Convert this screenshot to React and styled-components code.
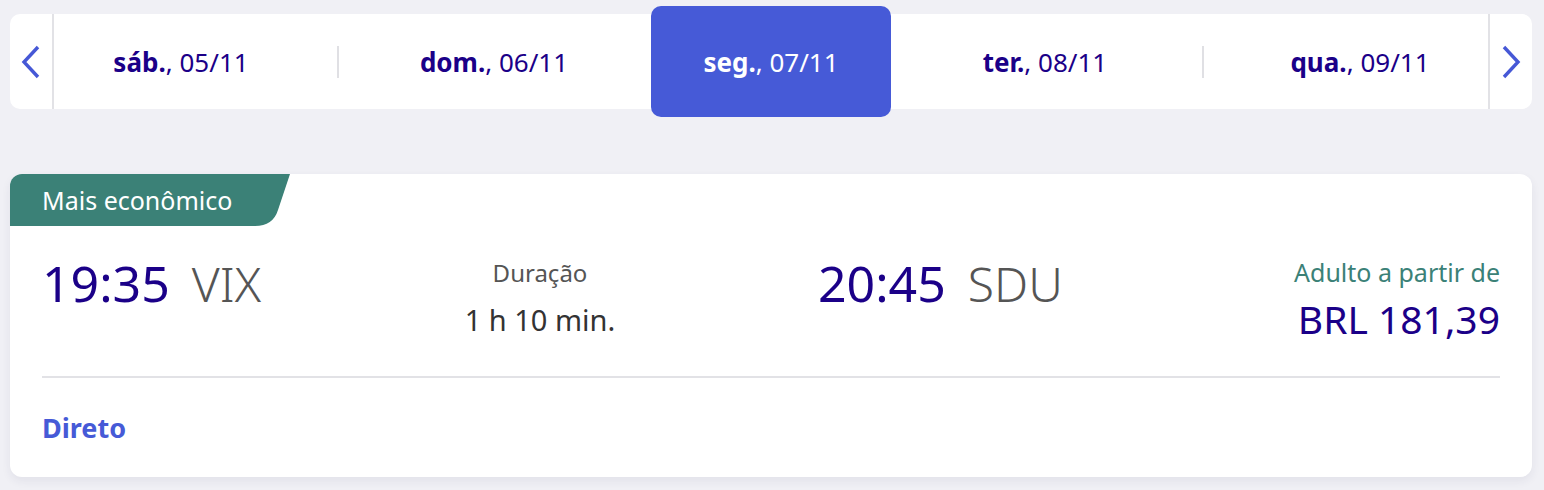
import React from 'react';
import styled, { createGlobalStyle } from 'styled-components';

const GlobalStyle = createGlobalStyle`
    body {
        margin: 0;
        background-color: #f0f0f5;
        font-family: "Noto Sans", "Open Sans", sans-serif;
    }
`

const Page = styled.div`
    width: 1544px;
    height: 490px;
    padding: 14px 12px 0 10px;
    box-sizing: border-box;
    display: flex;
    flex-direction: column;
`

const DateBar = styled.div`
    height: 95px;
    background-color: white;
    border-radius: 10px;
    display: flex;
    align-items: stretch;
`

const ArrowButton = styled.button`
    width: 44px;
    flex-shrink: 0;
    border: none;
    background: transparent;
    padding: 0;
    display: flex;
    align-items: center;
    justify-content: center;
    border-${p => p.side === 'left' ? 'right' : 'left'}: 2px solid #e2e2e6;
    color: #4658d6;
    cursor: pointer;
`

const Days = styled.div`
    flex: 1;
    display: grid;
    grid-template-columns: 240px 73px 240px 37px 240px 34px 240px 75px 240px;
    grid-template-rows: 95px;
    padding: 0 6px 0 7px;
    align-items: center;
`

const Day = styled.div`
    height: ${p => p.active ? '111px' : '95px'};
    margin: ${p => p.active ? '-8px 0' : '0'};
    border-radius: 10px;
    display: flex;
    align-items: center;
    justify-content: center;
    background-color: ${p => p.active ? '#465ad7' : 'transparent'};
    color: ${p => p.active ? 'white' : '#1b0088'};
    font-size: 26px;
    white-space: nowrap;

    b {
        font-weight: 700;
    }
`

const Gap = styled.div`
    display: flex;
    justify-content: center;
    &::after {
        content: '';
        display: ${p => p.line ? 'block' : 'none'};
        width: 2px;
        height: 32px;
        background-color: #e0e0e4;
    }
`

const Card = styled.div`
    margin-top: 65px;
    height: 303px;
    background-color: white;
    border-radius: 12px;
    box-shadow: 0 4px 10px rgba(40, 40, 90, 0.07);
    display: flex;
    flex-direction: column;
    overflow: hidden;
`

const Badge = styled.div`
    width: 280px;
    height: 52px;
    flex-shrink: 0;
    background-color: #3b8177;
    clip-path: path('M0 0 H280 L268 36 Q263 52 245 52 H0 Z');
    color: white;
    font-size: 25px;
    padding-left: 32px;
    box-sizing: border-box;
    display: flex;
    align-items: center;
`

const FlightRow = styled.div`
    display: grid;
    grid-template-columns: 220px 556px 1fr auto;
    padding: 0 32px;
    height: 150px;
    align-items: start;
`

const Times = styled.div`
    display: flex;
    align-items: baseline;
    gap: 22px;
    margin-top: 32px;
    line-height: 1;
    white-space: nowrap;
`

const Hour = styled.span`
    font-size: 50px;
    color: #1b0088;
`

const Airport = styled.span`
    font-size: 48px;
    font-weight: 300;
    color: #555;
`

const Duration = styled.div`
    display: flex;
    flex-direction: column;
    align-items: center;
    gap: 20px;
    margin-top: 35px;
    line-height: 1;
`

const SmallLabel = styled.div`
    font-size: ${p => p.size || 24}px;
    color: ${p => p.color || '#555'};
`

const DurationValue = styled.div`
    font-size: 29px;
    color: #333;
`

const Price = styled.div`
    display: flex;
    flex-direction: column;
    align-items: flex-end;
    gap: 14px;
    margin-top: 34px;
    line-height: 1;
`

const PriceValue = styled.div`
    font-size: 39px;
    color: #1b0088;
`

const Divider = styled.hr`
    margin: 0 32px;
    border: none;
    height: 2px;
    background-color: #e2e2e6;
`

const Stops = styled.div`
    padding: 0 32px;
    flex: 1;
    display: flex;
    align-items: center;
    font-size: 27px;
    font-weight: 700;
    color: #465ad7;
`

const Chevron = ({ dir }) => (
    <svg width="20" height="34" viewBox="0 0 20 34" fill="none">
        <path
            d={dir === 'left' ? 'M17 2 L3 17 L17 32' : 'M3 2 L17 17 L3 32'}
            stroke="currentColor"
            strokeWidth="3.4"
        />
    </svg>
)

const days = [
    { name: 'sáb.', date: '05/11' },
    { name: 'dom.', date: '06/11' },
    { name: 'seg.', date: '07/11', active: true },
    { name: 'ter.', date: '08/11' },
    { name: 'qua.', date: '09/11' },
]

// separator lines only between days that aren't next to the selected one
const gaps = [true, false, false, true]

const App = () => {
    return (
        <Page>
            <GlobalStyle />
            <DateBar>
                <ArrowButton side="left"><Chevron dir="left" /></ArrowButton>
                <Days>
                    {days.map((d, i) => (
                        <React.Fragment key={d.date}>
                            <Day active={d.active}><b>{d.name}</b>,&nbsp;{d.date}</Day>
                            {i < gaps.length && <Gap line={gaps[i]} />}
                        </React.Fragment>
                    ))}
                </Days>
                <ArrowButton side="right"><Chevron dir="right" /></ArrowButton>
            </DateBar>

            <Card>
                <Badge>Mais econômico</Badge>
                <FlightRow>
                    <Times>
                        <Hour>19:35</Hour>
                        <Airport>VIX</Airport>
                    </Times>
                    <Duration>
                        <SmallLabel>Duração</SmallLabel>
                        <DurationValue>1 h 10 min.</DurationValue>
                    </Duration>
                    <Times>
                        <Hour>20:45</Hour>
                        <Airport>SDU</Airport>
                    </Times>
                    <Price>
                        <SmallLabel size={25} color="#3b8177">Adulto a partir de</SmallLabel>
                        <PriceValue>BRL 181,39</PriceValue>
                    </Price>
                </FlightRow>
                <Divider />
                <Stops>Direto</Stops>
            </Card>
        </Page>
    )
}

export default App
